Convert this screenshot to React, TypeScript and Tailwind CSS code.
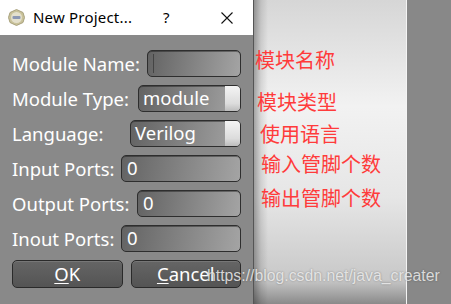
import type { ReactNode } from "react"

const fieldBg =
  "bg-[linear-gradient(100deg,#636363_0%,#808080_45%,#a4a4a4_100%)] border border-[#2e2e2e] rounded-[5px] shadow-[inset_0_1px_0_rgba(0,0,0,0.35)]"

function Row({ label, labelW, children }: { label: string; labelW: number; children: ReactNode }) {
  return (
    <div className="flex h-[27px] items-center">
      <div className="shrink-0 whitespace-nowrap" style={{ width: labelW }}>
        {label}
      </div>
      {children}
    </div>
  )
}

function Field({ value, caret }: { value?: string; caret?: boolean }) {
  return (
    <div className={`flex h-full flex-1 items-center pl-[5px] ${fieldBg}`}>
      {caret && <span className="h-[19px] w-px bg-[#444]" />}
      {value && <span className="leading-none">{value}</span>}
    </div>
  )
}

function Select({ value }: { value: string }) {
  return (
    <div className={`flex h-full flex-1 items-center overflow-hidden ${fieldBg}`}>
      <span className="flex-1 pl-[4px] leading-none">{value}</span>
      <span className="h-full w-[15px] bg-[linear-gradient(to_bottom,#f4f4f4,#dcdcdc_70%,#bdbdbd)]" />
    </div>
  )
}

function Button({ first, rest }: { first: string; rest: string }) {
  return (
    <div className="flex h-[28px] flex-1 items-center justify-center rounded-[5px] border border-[#2a2a2a] bg-[linear-gradient(to_bottom,#656565,#545454)] shadow-[inset_0_1px_0_rgba(255,255,255,0.12)]">
      <span>
        <span className="underline decoration-1 underline-offset-2">{first}</span>
        {rest}
      </span>
    </div>
  )
}

export default function App() {
  return (
    <div className="relative flex h-[304px] w-[451px] overflow-hidden bg-[#888888] font-['Noto_Sans',sans-serif]">
      <div className="flex w-[254px] shrink-0 flex-col border-r border-[#555]">
        <div className="flex h-[35px] items-center bg-white pl-[8px] text-[15px] text-black">
          <svg width="17" height="17" viewBox="0 0 17 17">
            <polygon points="8.5,0.5 15,3.5 16.5,8.5 15,13.5 8.5,16.5 2,13.5 0.5,8.5 2,3.5" fill="#c9c29a" stroke="#a9a27e" />
            <circle cx="8.5" cy="8.5" r="5.5" fill="#e4e0cc" />
            <rect x="4.5" y="7" width="8" height="3" rx="1" fill="#8c98b4" />
          </svg>
          <span className="ml-[8px] tracking-[0.2px]">New Project...</span>
          <span className="ml-[31px] text-[15px]">?</span>
          <svg className="ml-[51px]" width="12" height="12" viewBox="0 0 12 12">
            <path d="M0.5 0.5L11.5 11.5M11.5 0.5L0.5 11.5" stroke="#111" strokeWidth="1.1" />
          </svg>
        </div>
        <div className="flex flex-1 flex-col gap-[8px] bg-[#898989] px-[12px] pt-[15px] text-[18.5px] text-white">
          <Row label="Module Name:" labelW={135}>
            <Field caret />
          </Row>
          <Row label="Module Type:" labelW={126}>
            <Select value="module" />
          </Row>
          <Row label="Language:" labelW={118}>
            <Select value="Verilog" />
          </Row>
          <Row label="Input Ports:" labelW={109}>
            <Field value="0" />
          </Row>
          <Row label="Output Ports:" labelW={125}>
            <Field value="0" />
          </Row>
          <Row label="Inout Ports:" labelW={109}>
            <Field value="0" />
          </Row>
          <div className="flex gap-[8px]">
            <Button first="O" rest="K" />
            <Button first="C" rest="ancel" />
          </div>
        </div>
      </div>
      <div className="flex w-[153px] shrink-0 flex-col border-r border-[#f4f4f4] bg-[linear-gradient(to_right,rgba(0,0,0,0.32),rgba(0,0,0,0.1)_7px,transparent_14px),linear-gradient(to_bottom,#d6d6d6,#f2f2f2_35%,#e6e6e6_65%,#c8c8c8_92%,#8a8a8a)] pl-[1px] font-['Noto_Sans_CJK_SC',sans-serif] text-[20px] leading-none text-[#ff3b3b]">
        <span className="mt-[50px]">模块名称</span>
        <span className="ml-[2px] mt-[22px]">模块类型</span>
        <span className="ml-[5px] mt-[12px]">使用语言</span>
        <span className="ml-[6px] mt-[10px]">输入管脚个数</span>
        <span className="ml-[6px] mt-[14px]">输出管脚个数</span>
      </div>
      <div className="absolute left-[207px] top-[268px] font-['Liberation_Sans',sans-serif] text-[15.8px] leading-none text-[rgba(240,240,240,0.85)] [text-shadow:0_0_2px_rgba(0,0,0,0.35)]">
        https://blog.csdn.net/java_creater
      </div>
    </div>
  )
}
